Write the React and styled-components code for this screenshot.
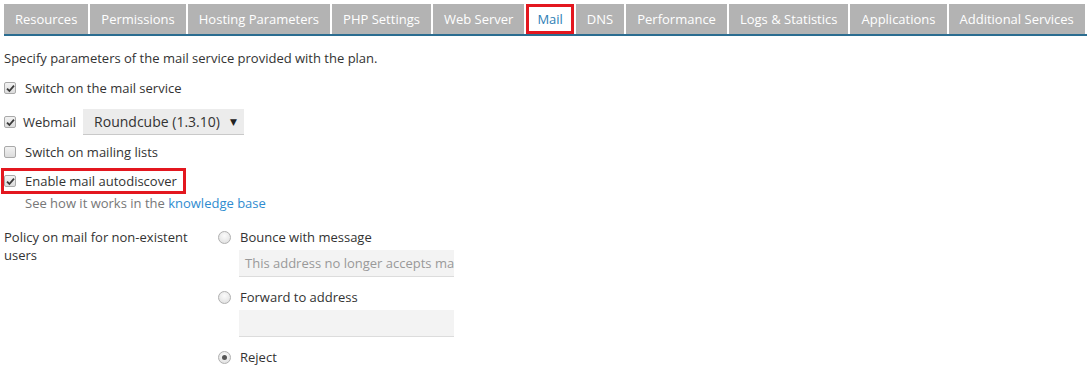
import React from "react";
import styled, { createGlobalStyle } from "styled-components";

const GlobalStyle = createGlobalStyle`
  body {
    margin: 0;
    background: #fff;
    font-family: "Open Sans", "DejaVu Sans", sans-serif;
    font-size: 13px;
    color: #333;
  }
  * {
    box-sizing: border-box;
  }
`;

const Page = styled.div`
  padding: 4px 2px 0 4px;
`;

const TabBar = styled.ul`
  display: flex;
  gap: 2px;
  margin: 0;
  padding: 0;
  list-style: none;
  border-bottom: 2px solid #2b6d91;
`;

const Tab = styled.li`
  height: 30px;
  line-height: 30px;
  padding: 0 11px;
  background: ${(p) => (p.$active ? "#fff" : "#b3b3b3")};
  color: ${(p) => (p.$active ? "#2d7eb5" : "#fff")};
  white-space: nowrap;
  box-shadow: ${(p) => (p.$active ? "0 0 0 3px #e3171f inset" : "none")};
`;

const Intro = styled.p`
  margin: 13px 0 0;
  line-height: 18px;
`;

const CheckRow = styled.label`
  display: inline-flex;
  align-items: center;
  gap: 9px;
  height: 18px;
  margin-top: ${(p) => p.$mt || 0}px;
`;

const BoxedRow = styled(CheckRow)`
  height: 26px;
  margin-left: -3px;
  padding: 0 6px 0 0;
  border: 3px solid #e3171f;
`;

const Block = styled.div`
  display: block;
`;

const Box = styled.span`
  width: 12px;
  height: 12px;
  border: 1px solid #a9a9a9;
  border-radius: 2px;
  background: linear-gradient(#f2f2f2, #dcdcdc);
  display: inline-flex;
  align-items: center;
  justify-content: center;
  flex: none;
`;

const Check = ({ on }) => (
  <Box>
    {on && (
      <svg width="9" height="9" viewBox="0 0 9 9">
        <path d="M1 4.6 L3.4 7 L8 1.6" stroke="#3a3a3a" strokeWidth="1.8" fill="none" />
      </svg>
    )}
  </Box>
);

const WebmailRow = styled.div`
  display: flex;
  align-items: center;
  gap: 7px;
  margin-top: 12px;
`;

const Select = styled.div`
  display: flex;
  align-items: center;
  height: 26px;
  padding: 0 7px 0 11px;
  background: #ececec;
  border-bottom: 1px solid #c9c9c9;
  font-size: 14px;
  color: #333;
`;

const Caret = styled.span`
  margin-left: 10px;
  font-size: 9px;
  color: #222;
`;

const Hint = styled.div`
  margin: 0 0 0 21px;
  color: #777;
  line-height: 18px;
`;

const Link = styled.a`
  color: #2f8cd0;
  text-decoration: none;
`;

const PolicyGrid = styled.div`
  display: grid;
  grid-template-columns: 211px 240px;
  margin-top: 16px;
`;

const PolicyLabel = styled.div`
  line-height: 18px;
  width: 195px;
`;

const Options = styled.div`
  display: flex;
  flex-direction: column;
`;

const RadioRow = styled.label`
  display: flex;
  align-items: center;
  gap: 9px;
  height: 18px;
  margin-top: ${(p) => p.$mt || 0}px;
`;

const RadioCircle = styled.span`
  width: 13px;
  height: 13px;
  margin-left: 3px;
  border-radius: 50%;
  border: 1px solid #b0b0b0;
  background: radial-gradient(circle at 50% 35%, #fbfbfb, #dcdcdc);
  display: inline-flex;
  align-items: center;
  justify-content: center;
  &::after {
    content: "";
    width: 5px;
    height: 5px;
    border-radius: 50%;
    background: ${(p) => (p.$on ? "#555" : "transparent")};
  }
`;

const TextInput = styled.div`
  width: 215px;
  height: 27px;
  margin: 4px 0 0 24px;
  padding: 0 6px;
  background: #f3f3f3;
  border-bottom: 1px solid #dcdcdc;
  line-height: 26px;
  color: #999;
  overflow: hidden;
  white-space: nowrap;
`;

const tabs = [
  "Resources",
  "Permissions",
  "Hosting Parameters",
  "PHP Settings",
  "Web Server",
  "Mail",
  "DNS",
  "Performance",
  "Logs & Statistics",
  "Applications",
  "Additional Services",
];

export default function App() {
  return (
    <>
      <GlobalStyle />
      <Page>
        <TabBar>
          {tabs.map((t) => (
            <Tab key={t} $active={t === "Mail"}>
              {t}
            </Tab>
          ))}
        </TabBar>
        <Intro>Specify parameters of the mail service provided with the plan.</Intro>
        <Block>
          <CheckRow $mt={12}>
            <Check on />
            Switch on the mail service
          </CheckRow>
        </Block>
        <WebmailRow>
          <CheckRow>
            <Check on />
          </CheckRow>
          <span>Webmail</span>
          <Select>
            Roundcube (1.3.10)
            <Caret>▼</Caret>
          </Select>
        </WebmailRow>
        <Block>
          <CheckRow $mt={8}>
            <Check />
            Switch on mailing lists
          </CheckRow>
        </Block>
        <Block>
          <BoxedRow $mt={6}>
            <Check on />
            Enable mail autodiscover
          </BoxedRow>
        </Block>
        <Hint>
          See how it works in the <Link href="#">knowledge base</Link>
        </Hint>
        <PolicyGrid>
          <PolicyLabel>Policy on mail for non-existent users</PolicyLabel>
          <Options>
            <RadioRow>
              <RadioCircle />
              Bounce with message
            </RadioRow>
            <TextInput>This address no longer accepts mail.</TextInput>
            <RadioRow $mt={11}>
              <RadioCircle />
              Forward to address
            </RadioRow>
            <TextInput />
            <RadioRow $mt={11}>
              <RadioCircle $on />
              Reject
            </RadioRow>
          </Options>
        </PolicyGrid>
      </Page>
    </>
  );
}
